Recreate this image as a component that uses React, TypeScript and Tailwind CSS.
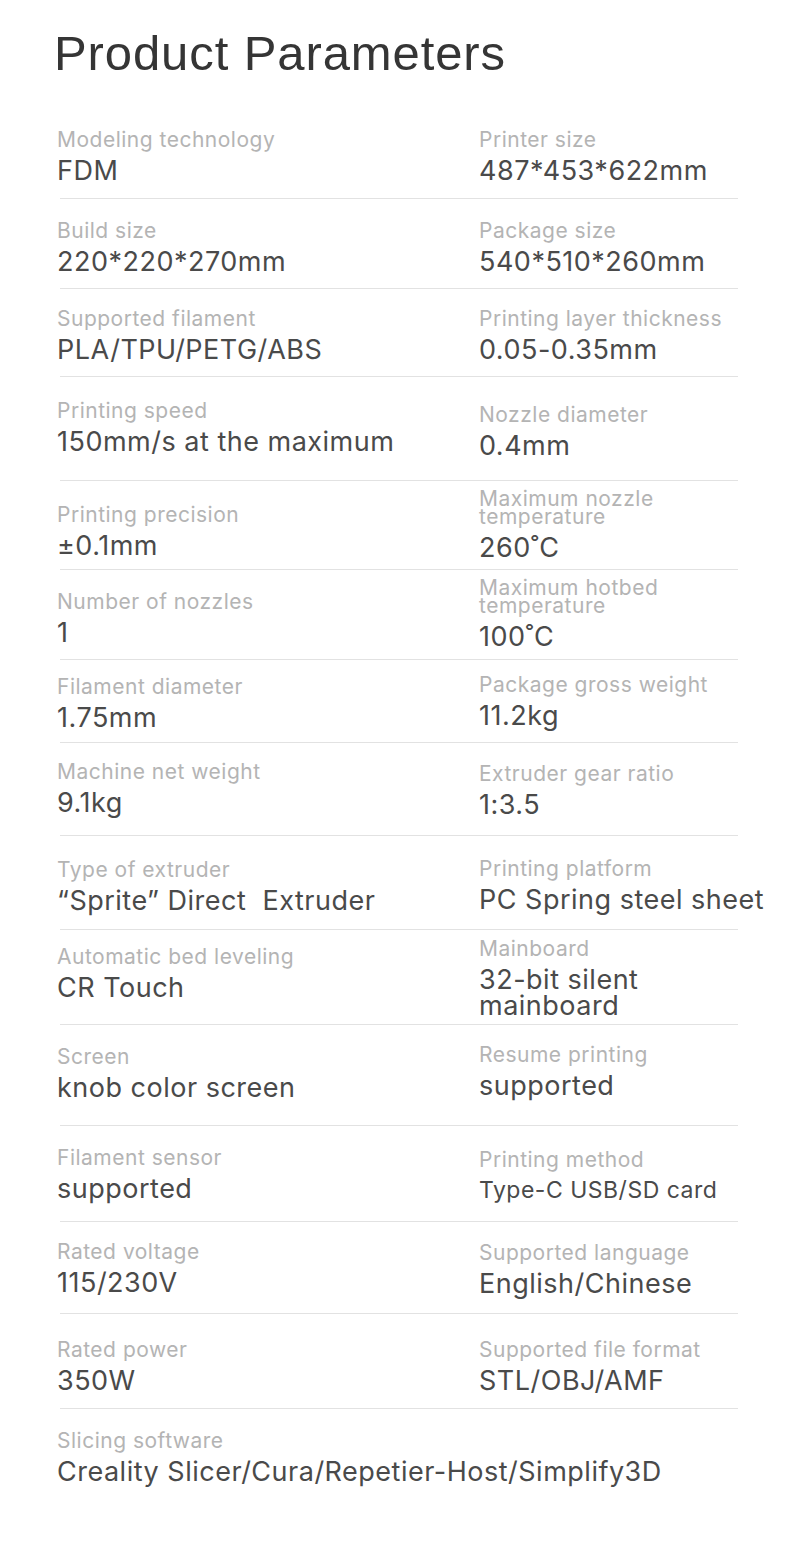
import type { ReactNode } from "react";

type Cell = {
  label: string;
  value: string;
  pt: number;
  twoLineLabel?: boolean;
  small?: boolean;
};

type Row = {
  h: number;
  left: Cell;
  right?: Cell;
};

const rows: Row[] = [
  {
    h: 99,
    left: { label: "Modeling technology", value: "FDM", pt: 27 },
    right: { label: "Printer size", value: "487*453*622mm", pt: 27 },
  },
  {
    h: 90,
    left: { label: "Build size", value: "220*220*270mm", pt: 19 },
    right: { label: "Package size", value: "540*510*260mm", pt: 19 },
  },
  {
    h: 88,
    left: { label: "Supported filament", value: "PLA/TPU/PETG/ABS", pt: 17 },
    right: { label: "Printing layer thickness", value: "0.05-0.35mm", pt: 17 },
  },
  {
    h: 104,
    left: { label: "Printing speed", value: "150mm/s at the maximum", pt: 21 },
    right: { label: "Nozzle diameter", value: "0.4mm", pt: 25 },
  },
  {
    h: 89,
    left: { label: "Printing precision", value: "±0.1mm", pt: 21 },
    right: { label: "Maximum nozzle\ntemperature", value: "260˚C", pt: 9, twoLineLabel: true },
  },
  {
    h: 90,
    left: { label: "Number of nozzles", value: "1", pt: 19 },
    right: { label: "Maximum hotbed\ntemperature", value: "100˚C", pt: 9, twoLineLabel: true },
  },
  {
    h: 83,
    left: { label: "Filament diameter", value: "1.75mm", pt: 14 },
    right: { label: "Package gross weight", value: "11.2kg", pt: 12 },
  },
  {
    h: 93,
    left: { label: "Machine net weight", value: "9.1kg", pt: 16 },
    right: { label: "Extruder gear ratio", value: "1:3.5", pt: 18 },
  },
  {
    h: 94,
    left: { label: "Type of extruder", value: "“Sprite” Direct  Extruder", pt: 21 },
    right: { label: "Printing platform", value: "PC Spring steel sheet", pt: 20 },
  },
  {
    h: 95,
    left: { label: "Automatic bed leveling", value: "CR Touch", pt: 14 },
    right: { label: "Mainboard", value: "32-bit silent\nmainboard", pt: 6 },
  },
  {
    h: 101,
    left: { label: "Screen", value: "knob color screen", pt: 19 },
    right: { label: "Resume printing", value: "supported", pt: 17 },
  },
  {
    h: 96,
    left: { label: "Filament sensor", value: "supported", pt: 19 },
    right: { label: "Printing method", value: "Type-C USB/SD card", pt: 21, small: true },
  },
  {
    h: 92,
    left: { label: "Rated voltage", value: "115/230V", pt: 17 },
    right: { label: "Supported language", value: "English/Chinese", pt: 18 },
  },
  {
    h: 95,
    left: { label: "Rated power", value: "350W", pt: 23 },
    right: { label: "Supported file format", value: "STL/OBJ/AMF", pt: 23 },
  },
];

function ParamCell({ cell }: { cell: Cell }) {
  return (
    <div style={{ paddingTop: cell.pt }}>
      <div
        className={
          cell.twoLineLabel
            ? "whitespace-pre-line text-[21px] leading-[18px] tracking-[0.5px] text-[#b4b4b4]"
            : "text-[21px] leading-[26px] tracking-[0.5px] text-[#b4b4b4]"
        }
      >
        {cell.label}
      </div>
      <div
        className={
          cell.small
            ? "mt-[2px] whitespace-pre text-[23px] leading-[30px] tracking-[0.5px] text-[#4a4a4a]"
            : cell.twoLineLabel
              ? "mt-[6px] whitespace-pre text-[27px] leading-[32px] tracking-[0.5px] text-[#4a4a4a]"
              : "mt-[2px] whitespace-pre text-[27px] leading-[26px] py-[3px] tracking-[0.5px] text-[#4a4a4a]"
        }
      >
        {cell.value}
      </div>
    </div>
  );
}

function Divider(): ReactNode {
  return <div className="ml-[3px] h-px w-[678px] bg-[#e2e2e2]" />;
}

export default function App() {
  return (
    <div className="min-h-[1548px] w-[790px] bg-white font-['Inter','Liberation_Sans',sans-serif]">
      <div className="pl-[54px] pt-[25px]">
        <h1 className="font-['Liberation_Sans',Arial,sans-serif] text-[49px] leading-[56px] tracking-[0.9px] text-[#353535]">
          Product Parameters
        </h1>
      </div>
      <div className="mt-[19px] pl-[57px]">
        {rows.map((row) => (
          <div key={row.left.label} className="flex flex-col" style={{ height: row.h }}>
            <div className="grid flex-1 grid-cols-[422px_1fr]">
              <ParamCell cell={row.left} />
              {row.right && <ParamCell cell={row.right} />}
            </div>
            <Divider />
          </div>
        ))}
        <div className="pt-[19px]">
          <div className="text-[21px] leading-[26px] tracking-[0.5px] text-[#b4b4b4]">Slicing software</div>
          <div className="mt-[2px] text-[27px] leading-[32px] tracking-[0.5px] text-[#4a4a4a]">
            Creality Slicer/Cura/Repetier-Host/Simplify3D
          </div>
        </div>
      </div>
    </div>
  );
}
